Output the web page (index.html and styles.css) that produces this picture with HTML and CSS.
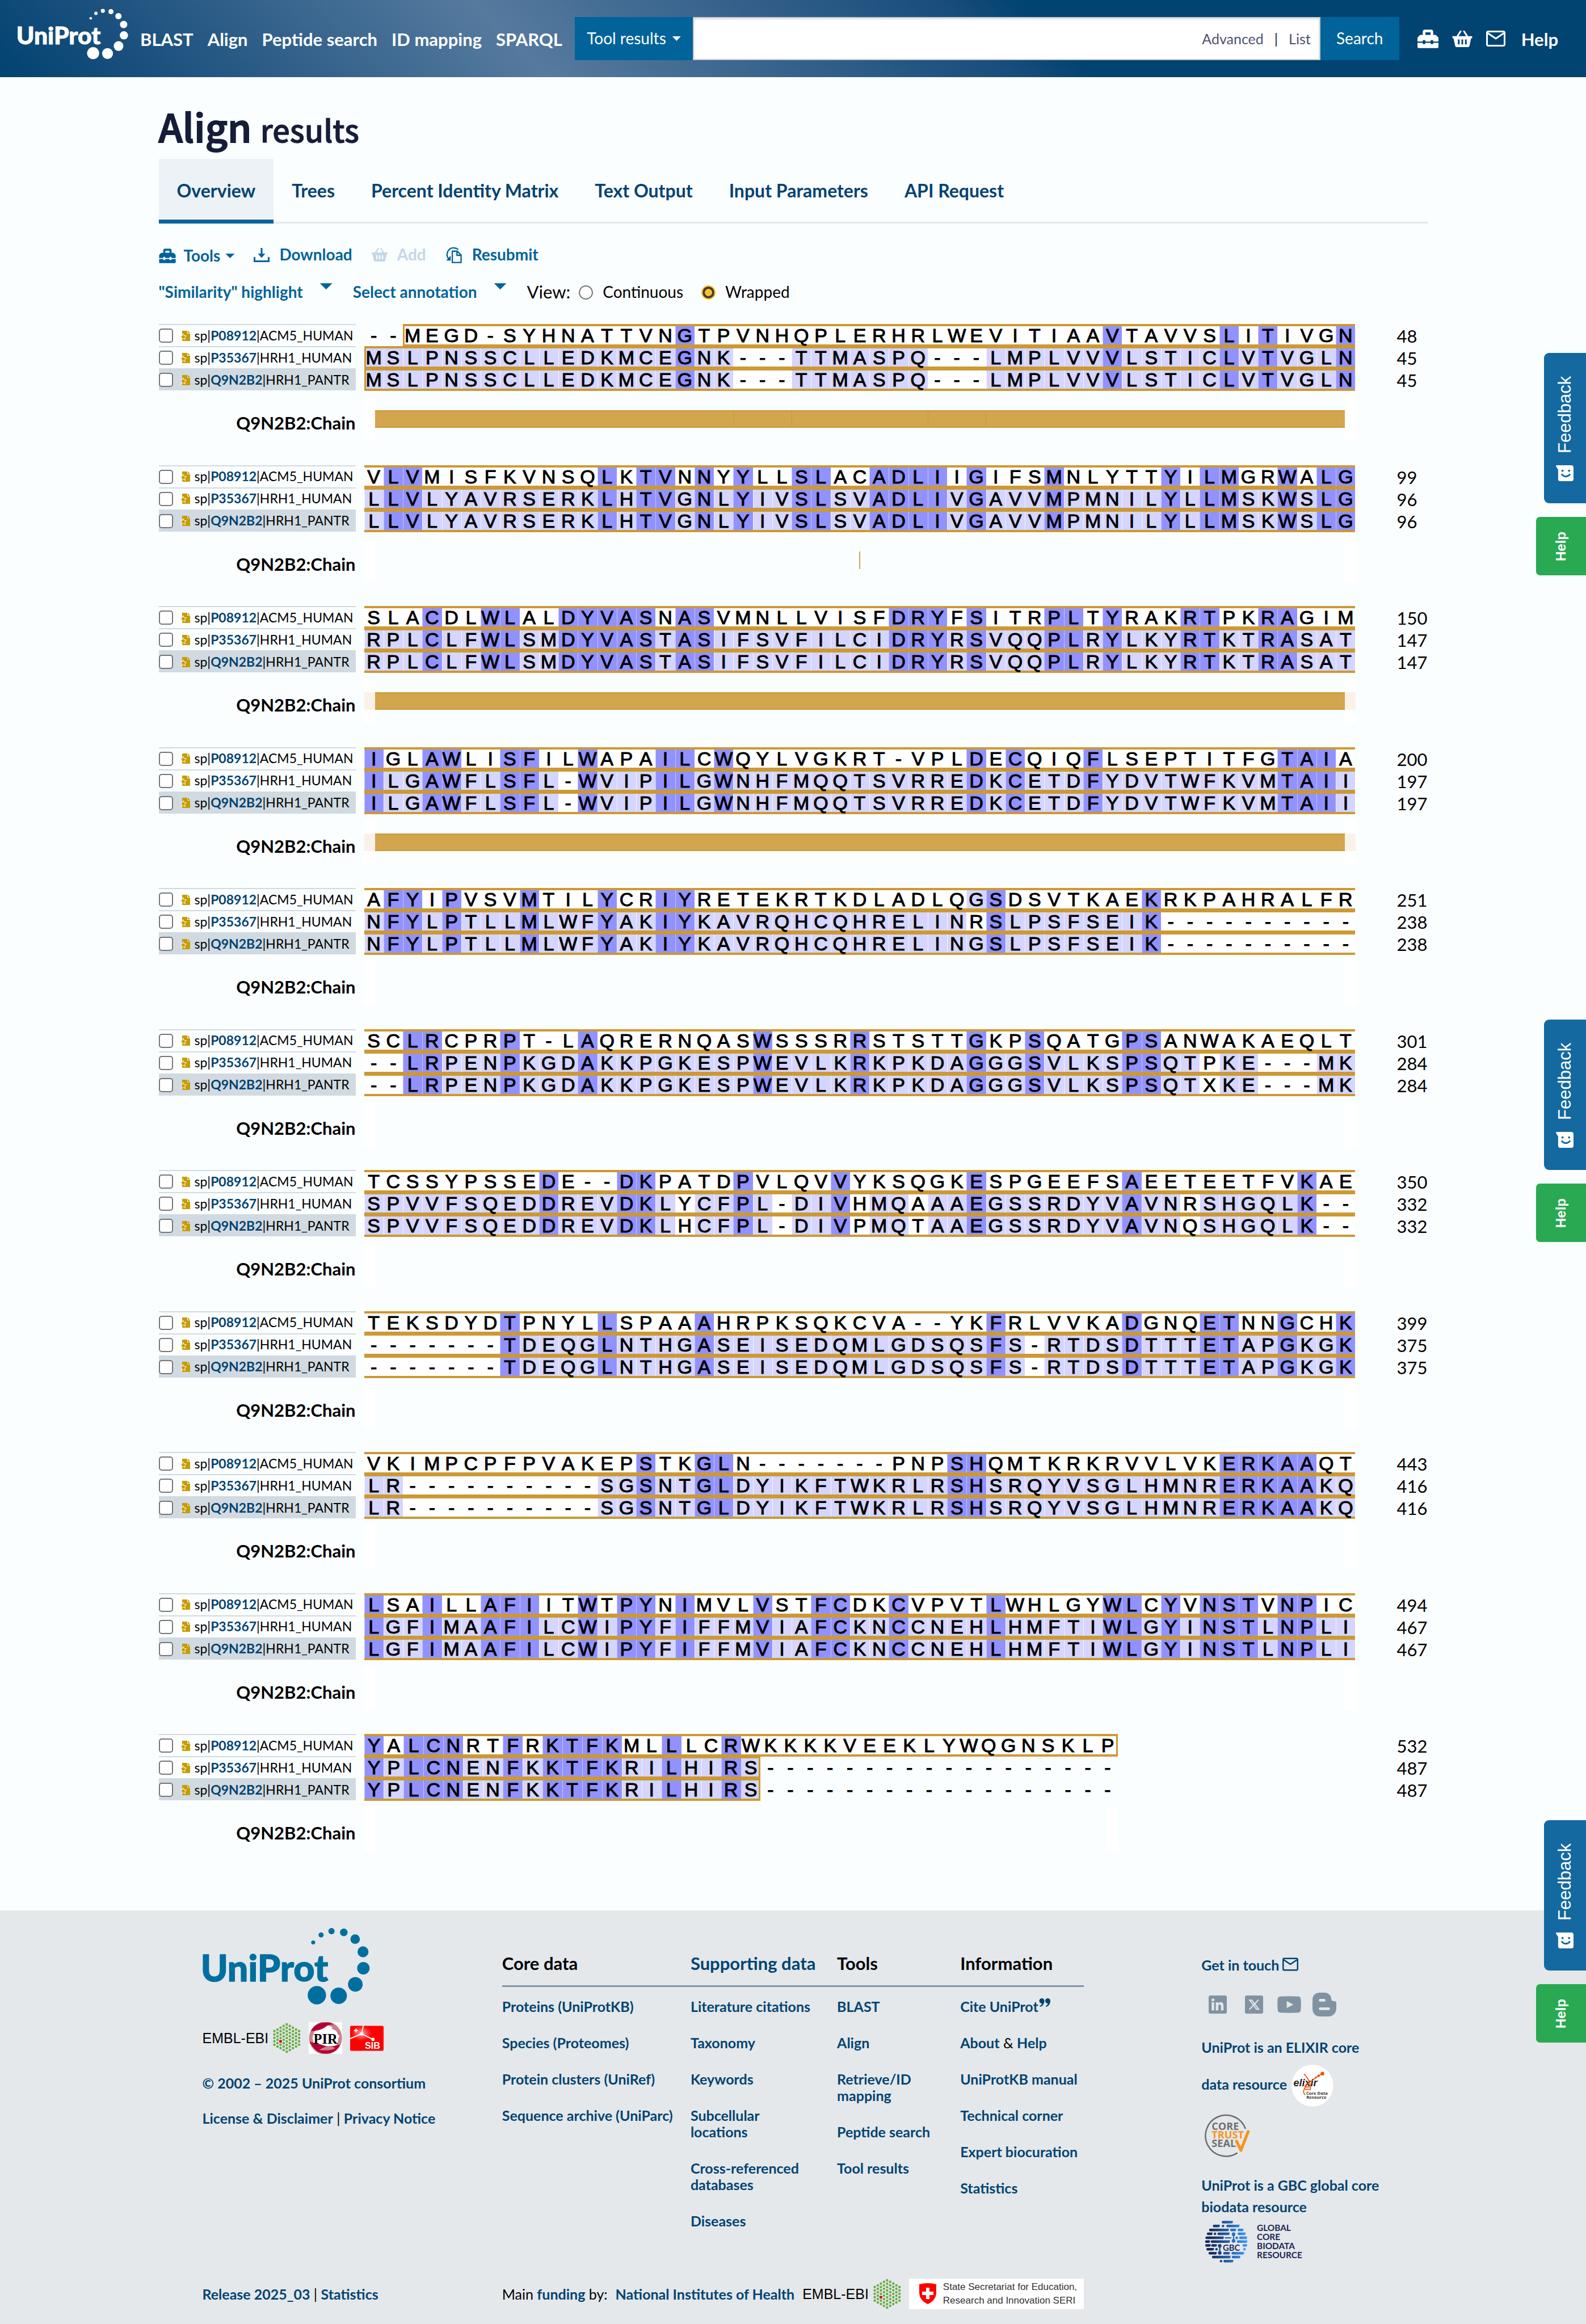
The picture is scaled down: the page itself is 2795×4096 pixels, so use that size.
FILE: index.html
```html
<!DOCTYPE html>
<html lang="en">
<head>
<meta charset="utf-8">
<title>Align results | UniProt</title>
<meta name="viewport" content="width=device-width, initial-scale=1">
<link rel="stylesheet" href="styles.css">
</head>
<body>
<svg class="sprite" aria-hidden="true">
  <symbol id="logo-dots" viewBox="38 35 914 418">
    <circle cx="642" cy="114" r="11"/><circle cx="685" cy="73" r="14"/><circle cx="742" cy="52" r="17"/>
    <circle cx="809" cy="59" r="21"/><circle cx="871" cy="96" r="26"/><circle cx="914" cy="165" r="30"/>
    <circle cx="916" cy="255" r="34"/><circle cx="872" cy="343" r="40"/><circle cx="781" cy="405" r="45"/>
    <circle cx="662" cy="402" r="50"/>
  </symbol>
  <symbol id="toolbox" viewBox="0 28 512 456">
    <path d="M502.6 214.6l-45.2-45.2c-6-6-14.2-9.4-22.7-9.4H384V80c0-26.5-21.5-48-48-48H176c-26.500 0-48 21.500-48 48v80H77.300c-8.500 0-16.600 3.400-22.700 9.400L9.400 214.600C3.400 220.600 0 228.800 0 237.300V320h128v-16c0-8.800 7.200-16 16-16h32c8.800 0 16 7.200 16 16v16h128v-16c0-8.800 7.200-16 16-16h32c8.800 0 16 7.200 16 16v16h128v-82.700c0-8.500-3.400-16.700-9.400-22.700zM320 160H192V96h128v64zm64 208c0 8.800-7.200 16-16 16h-32c-8.800 0-16-7.200-16-16v-16H192v16c0 8.800-7.200 16-16 16h-32c-8.800 0-16-7.200-16-16v-16H0v96c0 17.700 14.300 32 32 32h448c17.700 0 32-14.300 32-32v-96H384v16z"/>
  </symbol>
  <symbol id="basket" viewBox="0 0 36 30">
    <path d="M8 12 15 1M28 12 21 1" fill="none" stroke="currentColor" stroke-width="3" stroke-linecap="round"/>
    <path fill-rule="evenodd" d="M0 10h36v4h-2l-3 14q-.5 2-2.500 2h-21q-2 0-2.500-2L2 14H0zM10 16v9h3v-9zm6.500 0v9h3v-9zm6.500 0v9h3v-9z"/>
  </symbol>
  <symbol id="envelope" viewBox="0 0 34 28">
    <rect x="1.500" y="1.500" width="31" height="25" rx="2.500" fill="none" stroke="currentColor" stroke-width="3"/>
    <path d="M3 4.500 17 14 31 4.500" fill="none" stroke="currentColor" stroke-width="3"/>
  </symbol>
  <symbol id="download" viewBox="0 0 28 25">
    <path d="M12.500 0h3v10h5L14 17.500 7.500 10h5zM0 16h3v6h22v-6h3v9H0z"/>
  </symbol>
  <symbol id="resubmit" viewBox="0 0 30 30">
    <path d="M12 8h9l7 7v13.500H12zM20.500 8v7.500H28" fill="none" stroke="currentColor" stroke-width="2.400"/>
    <path d="M23 5C17 0 8 1 4 8c-3 6-1 12 3 16" fill="none" stroke="currentColor" stroke-width="2.400"/>
    <path d="M1 25h8v-9z"/>
  </symbol>
  <symbol id="reviewed" viewBox="0 0 17 18">
    <path fill="#c69c00" d="M3 0h9v5h5v13H3zM13 0l4 4h-4z"/>
    <path fill="#c69c00" stroke="#fff" d="M5 5l1.600 3.500 3.900.5-2.900 2.600.8 3.900L5 13.600l-3.400 1.900.8-3.900L-.5 9l3.900-.5z"/>
  </symbol>
  <symbol id="embl-dots" viewBox="428 550 153 168">
    <path fill="none" stroke="#6cae45" stroke-width="14" stroke-linecap="round" stroke-dasharray="0 18.750"
      d="M436 596V672M453 587V682M470 577V691M487 568V701M504 559V710M521 568V701M538 577V691M555 587V682M572 596V672"/>
    <circle cx="470" cy="652" r="8" fill="#e2001a"/>
  </symbol>
  <symbol id="smile" viewBox="0 0 32 29">
    <path d="M1 0h27q4 0 4 4v21q0 4-4 4H8q-4 0-4-4V8L0 2q0-2 1-2z"/>
    <circle class="knock" cx="12" cy="10" r="2"/><circle class="knock" cx="24" cy="10" r="2"/>
    <path class="knock-line" d="M10 16q8 9 16 0"/>
  </symbol>
</svg>

<header class="site-header">
  <a class="brand" href="#" aria-label="UniProt home"><svg viewBox="38 35 914 418"><text class="logo-word" x="28" y="327">UniProt</text><use href="#logo-dots" x="38" y="35" width="914" height="418"/></svg></a>
  <nav class="main-nav">
    <a href="#">BLAST</a><a href="#">Align</a><a href="#">Peptide search</a><a href="#">ID mapping</a><a href="#">SPARQL</a>
  </nav>
  <form class="search">
    <button class="search-scope" type="button">Tool results<span class="caret"></span></button>
    <div class="search-box">
      <input type="text" aria-label="Search text">
      <a href="#">Advanced</a><span class="bar">|</span><a href="#">List</a>
    </div>
    <button class="search-go" type="submit">Search</button>
  </form>
  <nav class="quick-nav">
    <a href="#" aria-label="Tool dashboard"><svg class="i-toolbox"><use href="#toolbox"/></svg></a>
    <a href="#" aria-label="Basket"><svg class="i-basket"><use href="#basket"/></svg></a>
    <a href="#" aria-label="Contact"><svg class="i-envelope"><use href="#envelope"/></svg></a>
    <a href="#">Help</a>
  </nav>
</header>

<main class="page">
  <h1>Align <small>results</small></h1>
  <nav class="tabs">
    <a class="active" href="#">Overview</a><a href="#">Trees</a><a href="#">Percent Identity Matrix</a><a href="#">Text Output</a><a href="#">Input Parameters</a><a href="#">API Request</a>
  </nav>
  <div class="toolbar">
    <button type="button" class="tools"><svg class="t-toolbox"><use href="#toolbox"/></svg>Tools<span class="caret"></span></button>
    <button type="button"><svg class="t-download"><use href="#download"/></svg>Download</button>
    <button type="button" disabled><svg class="t-basket"><use href="#basket"/></svg>Add</button>
    <button type="button"><svg class="t-resubmit"><use href="#resubmit"/></svg>Resubmit</button>
  </div>
  <div class="view-options">
    <button type="button">"Similarity" highlight<span class="caret"></span></button>
    <button type="button">Select annotation<span class="caret"></span></button>
    <fieldset>
      <span class="view-label">View:</span>
      <label><input type="radio" name="view">Continuous</label>
      <label><input type="radio" name="view" checked>Wrapped</label>
    </fieldset>
  </div>
  <section class="alignment" id="alignment" aria-label="Alignment"></section>
</main>

<footer class="site-footer">
  <div class="footer-grid">
    <div class="about">
      <a class="footer-logo" href="#" aria-label="UniProt"><svg viewBox="38 35 914 418"><text class="logo-word" x="28" y="327">UniProt</text><use href="#logo-dots" x="38" y="35" width="914" height="418"/></svg></a>
      <div class="partners">
        <span class="embl">EMBL-EBI</span>
        <svg class="dots"><use href="#embl-dots"/></svg>
        <svg class="pir" viewBox="624 548 183 172" role="img" aria-label="PIR">
          <path fill="#fff" d="M624 548h183v172H624z"/>
          <circle cx="716" cy="634" r="80" fill="none" stroke="#cf7f8d" stroke-width="20"/>
          <path fill="#fff" d="M690 562q50 30 105 60l-15 12q-50-40-110-52zM640 632q40 20 150-6l-6 14q-60 40-120 18z"/>
          <path fill="#b30032" d="M636 596q24-46 84-47 26 0 40 12-30-4-46 14-30 20-78 21zM628 654q50 10 90 24 40 4 78-8-18 44-74 49-50 2-78-40z"/>
          <path fill="#cf7f8d" d="M680 700q50-34 90-12-20 18-90 12zM770 560q30 26 30 56-24-24-52-34z"/>
          <text x="716" y="664" text-anchor="middle" class="pir-word">PIR</text>
        </svg>
        <svg class="sib" viewBox="849 568 183 137" role="img" aria-label="SIB">
          <defs><radialGradient id="glow" cx=".34" cy=".3" r=".3"><stop offset="0" stop-color="#ff9a9a"/><stop offset="1" stop-color="#fe0000"/></radialGradient></defs>
          <rect x="849" y="568" width="183" height="137" rx="7" fill="url(#glow)"/>
          <path d="M849 638 912 612 974 642M921 568 912 612M974 642V650" fill="none" stroke="#fff" stroke-width="6"/>
          <circle cx="912" cy="612" r="10" fill="#fff"/><circle cx="974" cy="642" r="9" fill="#fff"/>
          <path d="M881 583v22M870 594h22" stroke="#fff" stroke-width="6"/>
          <text x="930" y="695" class="sib-word">SIB</text>
        </svg>
      </div>
      <p><a href="#">© 2002 – 2025 UniProt consortium</a></p>
      <p><a href="#">License &amp; Disclaimer</a> | <a href="#">Privacy Notice</a></p>
    </div>

    <nav class="sitemap">
      <h2>Core data</h2><h2><a href="#">Supporting data</a></h2><h2>Tools</h2><h2>Information</h2>
      <ul><li><a href="#">Proteins (UniProtKB)</a></li><li><a href="#">Species (Proteomes)</a></li><li><a href="#">Protein clusters (UniRef)</a></li><li><a href="#">Sequence archive (UniParc)</a></li></ul>
      <ul><li><a href="#">Literature citations</a></li><li><a href="#">Taxonomy</a></li><li><a href="#">Keywords</a></li><li><a href="#">Subcellular<br>locations</a></li><li><a href="#">Cross-referenced databases</a></li><li><a href="#">Diseases</a></li></ul>
      <ul><li><a href="#">BLAST</a></li><li><a href="#">Align</a></li><li><a href="#">Retrieve/ID<br>mapping</a></li><li><a href="#">Peptide search</a></li><li><a href="#">Tool results</a></li></ul>
      <ul><li><a href="#">Cite UniProt<svg class="quotes" viewBox="0 0 20 15"><path d="M5 0a4.500 4.500 0 0 1 4.500 4.500C9.500 10 6 14 2 15l-.8-1.500C4 12 5 10.500 5 9A4.500 4.500 0 0 1 5 0zM15.500 0A4.500 4.500 0 0 1 20 4.500C20 10 16.500 14 12.500 15l-.8-1.500c2.800-1.500 3.800-3 3.800-4.500a4.500 4.500 0 0 1 0-9z"/></svg></a></li><li><a href="#">About</a> &amp; <a href="#">Help</a></li><li><a href="#">UniProtKB manual</a></li><li><a href="#">Technical corner</a></li><li><a href="#">Expert biocuration</a></li><li><a href="#">Statistics</a></li></ul>
    </nav>

    <div class="contact">
      <p><a href="#">Get in touch <svg class="mail"><use href="#envelope"/></svg></a></p>
      <div class="social">
        <a href="#" aria-label="LinkedIn"><svg class="square" viewBox="0 0 33 33"><rect width="33" height="33" rx="3"/><path class="paper" d="M5.500 12.500h4.500V27H5.500zM13 12.500h4.300v2c2.500-3.700 9.700-3.200 9.700 4V27h-4.500v-7.500c0-4.500-5-4-5 0V27H13z"/><circle class="paper" cx="7.800" cy="8" r="2.600"/></svg></a>
        <a href="#" aria-label="X"><svg class="square" viewBox="0 0 33 33"><rect width="33" height="33" rx="3"/><path class="paper-line" d="M8.500 8.500h4L25 25h-4zM24.500 8 8 25.500"/></svg></a>
        <a href="#" aria-label="YouTube"><svg class="wide" viewBox="0 0 43 31"><path d="M5 .7Q21 0 38 .7q4 .3 4.500 5 1 10 0 20-.5 4.300-4.500 4.600-17 .9-33 0-4-.3-4.500-4.600-1-10 0-20Q1 1 5 .7z"/><path class="paper" d="M17 9v13l12-6.500z"/></svg></a>
        <a href="#" aria-label="Blogger"><svg class="tall" viewBox="0 0 43 43"><path d="M13 0h8c8 0 12.500 5 13 11 .2 3 1 4 3.500 4 4 0 5.500 1 5.500 4v9c0 9-6 15-14 15H14C5 43 0 37 0 29V13C0 5 5 0 13 0z"/><path class="paper-bar" d="M14 13.700h7M14 29h15"/></svg></a>
      </div>
      <p class="elixir"><a href="#">UniProt is an ELIXIR core<br>data resource
        <svg viewBox="529 437 231 231" role="img" aria-label="ELIXIR Core Data Resource">
          <circle cx="644" cy="552" r="115" fill="#fff"/>
          <text class="elixir-word" x="540" y="555">elixir</text>
          <path d="M598 488q28 28 34 60 4 20-2 30M700 484q-50 34-76 52-22 20-28 44-2 14 8 24M606 560h22M602 572h26" fill="none" stroke="#f04e00" stroke-width="5"/>
          <circle cx="699" cy="486" r="10" fill="#f04e00"/><circle cx="678" cy="498" r="7" fill="#f04e00"/><circle cx="662" cy="507" r="5" fill="#f04e00"/>
          <text class="elixir-small" x="610" y="604">Core Data</text><text class="elixir-small" x="611" y="625">Resource</text>
        </svg></a></p>
      <a class="trust" href="#"><svg viewBox="55 709 247 234" role="img" aria-label="Core Trust Seal">
        <path d="M277 789A112 112 0 1 0 233 920" fill="none" stroke="#6e6f73" stroke-width="8"/>
        <text class="trust-word" x="93" y="794">CORE</text><text class="trust-word hot" x="93" y="841">TRUST</text><text class="trust-word" x="93" y="888">SEAL</text>
        <path d="M228 856 252 906 292 804" fill="none" stroke="#f7941d" stroke-width="16" stroke-linecap="round" stroke-linejoin="round"/>
      </svg></a>
      <p class="gbc"><a href="#">UniProt is a GBC global core<br>biodata resource</a></p>
      <a class="gbc-logo" href="#"><svg viewBox="58 1290 545 237" role="img" aria-label="Global Core Biodata Resource">
        <defs><linearGradient id="sea" gradientUnits="userSpaceOnUse" x1="90" y1="0" x2="280" y2="0"><stop offset="0" stop-color="#16295a"/><stop offset="1" stop-color="#3596f5"/></linearGradient></defs>
        <g fill="none" stroke="url(#sea)" stroke-linecap="round">
          <path stroke-width="14" d="M157 1301h47v.1M108 1322h24v.1M157 1322v.1M182 1322h58v.1M87 1344h95v.1M203 1344h19v.1M244 1344h18v.1M75 1365h17v.1M113 1365v.1M133 1365h53v.1M244 1365h30v.1M67 1387h87v.1M232 1387v.1M252 1387h30v.1M65 1408h13v.1M96 1408h92v.1M240 1408h43v.1M66 1429h16v.1M99 1429h17v.1M271 1429h11v.1M72 1450h28v.1M121 1450v.1M275 1450v.1M84 1472h31v.1M165 1472h22v.1M210 1472h55v.1M103 1493h88v.1M212 1493h33v.1M146 1515v.1M166 1515h40v.1"/>
          <path stroke-width="20" d="M215 1367v.1M215 1404v.1M139 1431v.1M139 1470v.1"/>
          <path stroke-width="7" d="M215 1367l.1 37M139 1431l.1 39M170 1387l30 .1"/>
        </g>
        <text class="gbc-word" x="156" y="1457">GBC</text>
        <text class="gbc-name" x="343" y="1349">GLOBAL</text><text class="gbc-name" x="343" y="1399">CORE</text><text class="gbc-name" x="343" y="1450">BIODATA</text><text class="gbc-name" x="343" y="1500">RESOURCE</text>
      </svg></a>
    </div>
  </div>

  <div class="footer-grid footer-bottom">
    <p><a href="#">Release 2025_03</a> | <a href="#">Statistics</a></p>
    <div class="funding">
      <p>Main <a href="#">funding</a> by:</p>
      <a href="#">National Institutes of Health</a>
      <span class="embl">EMBL-EBI</span>
      <svg class="dots"><use href="#embl-dots"/></svg>
      <a class="seri" href="#">
        <svg viewBox="0 0 32 38"><path fill="#f00" d="M1 2q15-4 30 0v14q0 14-15 21Q1 30 1 16z"/><path fill="#fff" d="M13 8h6v7h7v6h-7v7h-6v-7H6v-6h7z"/></svg>
        <span>State Secretariat for Education,<br>Research and Innovation SERI</span>
      </a>
    </div>
  </div>
</footer>

<aside class="side-tabs first"><button type="button" class="feedback"><svg><use href="#smile"/></svg>Feedback</button><button type="button" class="help">Help</button></aside>
<aside class="side-tabs second"><button type="button" class="feedback"><svg><use href="#smile"/></svg>Feedback</button><button type="button" class="help">Help</button></aside>
<aside class="side-tabs third"><button type="button" class="feedback"><svg><use href="#smile"/></svg>Feedback</button><button type="button" class="help">Help</button></aside>

<script src="script.js"></script>
</body>
</html>
```

FILE: script.js
```js
// Aligned sequences, one array entry per wrapped block.
const names = [
  { accession: 'P08912', entry: 'ACM5_HUMAN' },
  { accession: 'P35367', entry: 'HRH1_HUMAN' },
  { accession: 'Q9N2B2', entry: 'HRH1_PANTR', active: true },
];

const blocks = [
  { ends: [48, 45, 45], rows: [
    '--MEGD-SYHNATTVNGTPVNHQPLERHRLWEVITIAAVTAVVSLITIVGN',
    'MSLPNSSCLLEDKMCEGNK---TTMASPQ---LMPLVVVLSTICLVTVGLN',
    'MSLPNSSCLLEDKMCEGNK---TTMASPQ---LMPLVVVLSTICLVTVGLN'] },
  { ends: [99, 96, 96], rows: [
    'VLVMISFKVNSQLKTVNNYYLLSLACADLIIGIFSMNLYTTYILMGRWALG',
    'LLVLYAVRSERKLHTVGNLYIVSLSVADLIVGAVVMPMNILYLLMSKWSLG',
    'LLVLYAVRSERKLHTVGNLYIVSLSVADLIVGAVVMPMNILYLLMSKWSLG'] },
  { ends: [150, 147, 147], rows: [
    'SLACDLWLALDYVASNASVMNLLVISFDRYFSITRPLTYRAKRTPKRAGIM',
    'RPLCLFWLSMDYVASTASIFSVFILCIDRYRSVQQPLRYLKYRTKTRASAT',
    'RPLCLFWLSMDYVASTASIFSVFILCIDRYRSVQQPLRYLKYRTKTRASAT'] },
  { ends: [200, 197, 197], rows: [
    'IGLAWLISFILWAPAILCWQYLVGKRT-VPLDECQIQFLSEPTITFGTAIA',
    'ILGAWFLSFL-WVIPILGWNHFMQQTSVRREDKCETDFYDVTWFKVMTAII',
    'ILGAWFLSFL-WVIPILGWNHFMQQTSVRREDKCETDFYDVTWFKVMTAII'] },
  { ends: [251, 238, 238], rows: [
    'AFYIPVSVMTILYCRIYRETEKRTKDLADLQGSDSVTKAEKRKPAHRALFR',
    'NFYLPTLLMLWFYAKIYKAVRQHCQHRELINRSLPSFSEIK----------',
    'NFYLPTLLMLWFYAKIYKAVRQHCQHRELINGSLPSFSEIK----------'] },
  { ends: [301, 284, 284], rows: [
    'SCLRCPRPT-LAQRERNQASWSSSRRSTSTTGKPSQATGPSANWAKAEQLT',
    '--LRPENPKGDAKKPGKESPWEVLKRKPKDAGGGSVLKSPSQTPKE---MK',
    '--LRPENPKGDAKKPGKESPWEVLKRKPKDAGGGSVLKSPSQTXKE---MK'] },
  { ends: [350, 332, 332], rows: [
    'TCSSYPSSEDE--DKPATDPVLQVVYKSQGKESPGEEFSAEETEETFVKAE',
    'SPVVFSQEDDREVDKLYCFPL-DIVHMQAAAEGSSRDYVAVNRSHGQLK--',
    'SPVVFSQEDDREVDKLHCFPL-DIVPMQTAAEGSSRDYVAVNQSHGQLK--'] },
  { ends: [399, 375, 375], rows: [
    'TEKSDYDTPNYLLSPAAAHRPKSQKCVA--YKFRLVVKADGNQETNNGCHK',
    '-------TDEQGLNTHGASEISEDQMLGDSQSFS-RTDSDTTTETAPGKGK',
    '-------TDEQGLNTHGASEISEDQMLGDSQSFS-RTDSDTTTETAPGKGK'] },
  { ends: [443, 416, 416], rows: [
    'VKIMPCPFPVAKEPSTKGLN-------PNPSHQMTKRKRVVLVKERKAAQT',
    'LR----------SGSNTGLDYIKFTWKRLRSHSRQYVSGLHMNRERKAAKQ',
    'LR----------SGSNTGLDYIKFTWKRLRSHSRQYVSGLHMNRERKAAKQ'] },
  { ends: [494, 467, 467], rows: [
    'LSAILLAFIITWTPYNIMVLVSTFCDKCVPVTLWHLGYWLCYVNSTVNPIC',
    'LGFIMAAFILCWIPYFIFFMVIAFCKNCCNEHLHMFTIWLGYINSTLNPLI',
    'LGFIMAAFILCWIPYFIFFMVIAFCKNCCNEHLHMFTIWLGYINSTLNPLI'] },
  { ends: [532, 487, 487], rows: [
    'YALCNRTFRKTFKMLLLCRWKKKKVEEKLYWQGNSKLP',
    'YPLCNENFKKTFKRILHIRS------------------',
    'YPLCNENFKKTFKRILHIRS------------------'] },
];

// Chain annotation drawn under a block: a bar with its splits (in % of the width), or a single tick.
const chains = {
  0: { bar: true, splits: [37, 43, 57, 63] },
  1: { bar: false },
  2: { bar: true, splits: [], faded: true },
  3: { bar: true, splits: [], faded: true },
};

const make = (tag, className, text) => {
  const node = document.createElement(tag);
  if (className) node.className = className;
  if (text !== undefined) node.textContent = text;
  return node;
};

// "full" when the whole column agrees, "part" when two of three do.
const similarity = (rows, column, residue) => {
  if (residue === '-') return '';
  const same = rows.filter((row) => row[column] === residue).length;
  return same === rows.length ? ' full' : same > 1 ? ' part' : '';
};

const renderLabel = ({ accession, entry, active }, index) => {
  const id = `select-${index}-${accession}`;
  const row = make('div', active ? 'seq-label active' : 'seq-label');
  const box = make('input');
  box.type = 'checkbox';
  box.id = id;
  const label = make('label');
  label.htmlFor = id;
  label.innerHTML = `<svg class="reviewed"><use href="#reviewed"/></svg>sp|<a href="#">${accession}</a>|${entry}`;
  row.append(box, label);
  return row;
};

const renderSequence = (rows, r, isFirst, isLast) => {
  const row = rows[r];
  const line = make('div', 'sequence');
  line.style.gridTemplateColumns = `repeat(${row.length}, 1fr)`;
  const start = isFirst ? row.search(/[A-Z]/) : 0;
  const end = isLast ? row.length - row.match(/-*$/)[0].length - 1 : row.length - 1;
  [...row].forEach((residue, i) => {
    let name = 'residue' + similarity(rows, i, residue);
    if (i >= start && i <= end) name += ' in';
    if (isFirst && i === start) name += ' start';
    if (isLast && i === end) name += ' end';
    line.append(make('span', name, residue));
  });
  return line;
};

const renderTrack = (chain) => {
  const track = make('div', 'track');
  if (!chain) return track;
  if (!chain.bar) {
    track.append(make('div', 'tick'));
    return track;
  }
  if (chain.faded) track.classList.add('faded');
  const bar = make('div', 'bar-fill');
  chain.splits.forEach((at) => {
    const split = make('i');
    split.style.left = `${at}%`;
    bar.append(split);
  });
  track.append(bar);
  return track;
};

const host = document.getElementById('alignment');
blocks.forEach(({ rows, ends }, b) => {
  const block = make('div', 'block');
  const labels = make('div', 'labels');
  names.forEach((name) => labels.append(renderLabel(name, b)));
  labels.append(make('div', 'track-label', 'Q9N2B2:Chain'));

  const isLast = b === blocks.length - 1;
  const canvas = make('div', isLast ? 'canvas short' : 'canvas');
  rows.forEach((_, r) => canvas.append(renderSequence(rows, r, b === 0, isLast)));
  canvas.append(renderTrack(chains[b]));

  const numbers = make('div', 'ends');
  ends.forEach((end) => numbers.append(make('span', '', end)));
  block.append(labels, canvas, numbers);
  host.append(block);
});
```

FILE: styles.css
```css
:root {
  --sea: #00639a;
  --sapphire: #014371;
  --platinum: #e4e8eb;
  --gold: #cc9933;
  --paper: #fbfeff;
}

* { box-sizing: border-box; }

body {
  position: relative;
  margin: 0;
  background: var(--paper);
  color: #000;
  font: 400 31px/1.2 Lato, sans-serif;
}

a { color: inherit; text-decoration: none; }
button { border: 0; padding: 0; background: none; color: inherit; font: inherit; }
svg { display: block; fill: currentColor; }
.sprite { position: absolute; width: 0; height: 0; }
.logo-word { font: 900 200px Lato, sans-serif; stroke: currentColor; stroke-width: 4px; stroke-linejoin: round; }

.caret {
  width: 16px;
  height: 8px;
  background: currentColor;
  clip-path: polygon(0 0, 100% 0, 50% 100%);
}

/* Header */
.site-header {
  display: flex;
  align-items: center;
  height: 136px;
  padding: 0 49px 0 31px;
  background: linear-gradient(45deg, #014371 0%, #194f7d 9%, #567a9e 33%, #194d7c 61%, #014371 66%);
  color: #fff;
}
.brand { align-self: flex-start; margin-top: 15px; }
.brand svg, .footer-logo svg { overflow: visible; }
.brand svg { width: 195px; height: 90px; }
.main-nav { display: flex; gap: 25px; margin: 4px 22px 0 21px; font-weight: 700; }
.search { display: flex; flex: 1; height: 76px; font-size: 28px; }
.search-scope { display: flex; align-items: center; justify-content: center; gap: 11px; width: 208px; background: var(--sea); }
.search-scope .caret { width: 15px; }
.search-box {
  display: flex;
  flex: 1;
  align-items: center;
  padding-right: 15px;
  border: 2px solid #cacaca;
  background: #fff;
  box-shadow: inset 0 2px 4px rgba(0, 0, 0, .12);
  color: #4f5170;
  font-size: 25px;
}
.search-box input { flex: 1; min-width: 0; height: 100%; border: 0; background: none; font: inherit; outline: 0; }
.search-box .bar { margin: 0 19px; color: #161d39; }
.search-go { width: 139px; background: var(--sea); }
.quick-nav { display: flex; align-items: center; margin-left: 32px; font-weight: 700; }
.quick-nav a:last-child { margin-top: 4px; }
.i-toolbox { width: 37px; height: 33px; margin-right: 24px; }
.i-basket { width: 36px; height: 29px; margin-right: 24px; }
.i-envelope { width: 34px; height: 28px; margin-right: 28px; }

/* Page */
.page { margin: 0 10%; padding: 36px 0 105px; }
h1 { margin: 0; color: #161d39; font: 500 68px/100px "Noto Sans CJK JP", sans-serif; -webkit-text-stroke: 2px #161d39; }
h1 small { font-size: 54px; line-height: 1; -webkit-text-stroke-width: 1px; }

.tabs { display: flex; margin-top: 8px; border-bottom: 3px solid var(--platinum); color: var(--sapphire); font-size: 32px; font-weight: 700; }
.tabs a { height: 114px; margin-bottom: -3px; padding: 37px 32px 0; }
.tabs .active { border-bottom: 7px solid var(--sea); background: #edf2f6; }

.toolbar { display: flex; align-items: center; gap: 34px; height: 36px; margin-top: 37px; color: var(--sea); font-size: 28px; font-weight: 700; }
.toolbar button { display: flex; align-items: center; gap: 17px; }
.toolbar button:disabled { color: #c5d7e5; }
.toolbar .tools { gap: 14px; padding-top: 4px; }
.toolbar .tools .caret { margin-left: -5px; }
.t-toolbox { width: 30px; height: 26px; }
.t-download { width: 28px; height: 25px; }
.t-basket { width: 28px; height: 24px; }
.t-resubmit { width: 30px; height: 29px; }

.view-options { display: flex; align-items: center; gap: 36px; height: 40px; margin-top: 28px; font-size: 28px; }
.view-options > button { display: flex; align-items: flex-start; gap: 30px; color: var(--sea); font-weight: 700; }
.view-options .caret { width: 22px; height: 11px; margin-top: 1px; }
fieldset { display: flex; align-items: center; gap: 32px; margin: 0; padding: 0; border: 0; }
.view-label { margin-right: -17px; font-size: 31px; }
fieldset label { display: flex; align-items: center; gap: 17px; }
input[type=radio] { appearance: none; width: 25px; height: 25px; margin: 0; border: 2px solid #767676; border-radius: 50%; background: #fff; }
input[type=radio]:checked { border-color: #fbbd1e; background: #fdbf25; box-shadow: inset 0 0 0 4px #3c3c3c; }

/* Alignment */
.alignment { display: flex; flex-direction: column; justify-content: space-between; min-height: 2691px; margin-top: 36px; }
.block { display: grid; grid-template-columns: 347px 1fr 54px; }
.seq-label { display: flex; align-items: center; height: 39px; border-top: 2px solid #d1dae1; font-size: 23px; white-space: nowrap; }
.seq-label.active { background: #d1dae1; }
.seq-label label { display: flex; align-items: center; }
.seq-label a { color: var(--sapphire); font-weight: 700; }
.seq-label input { appearance: none; width: 25px; height: 25px; margin: 0 13px 0 0; border: 2px solid #767676; border-radius: 5px; background: #fff; }
.reviewed { width: 17px; height: 18px; margin-right: 8px; }
.track-label { margin-top: 39px; font-size: 31px; font-weight: 700; text-align: right; }
.canvas { margin: 0 73px 0 15px; }
.canvas.short { margin-right: 492px; }
.sequence { display: grid; height: 39px; }
.residue {
  min-width: 0;
  border-block: 4px solid transparent;
  font: 400 34px/32px "Liberation Sans", sans-serif;
  text-align: center;
  -webkit-text-stroke: 1px #000;
}
.residue.in { border-color: var(--gold); background-color: #fff; }
.residue.part { background-color: #d5d5fe; box-shadow: inset 1px 0 #f4f4ff; }
.residue.full { background-color: #9292fe; box-shadow: inset 1px 0 #c4c4ff; }
.residue.start { box-shadow: inset 3px 0 var(--gold); }
.residue.end { box-shadow: inset -3px 0 var(--gold); }
.track { height: 77px; margin-top: 12px; padding: 23px 19px; background: linear-gradient(90deg, #fff 19px, transparent 19px calc(100% - 19px), #fff 0); }
.track.faded { background: linear-gradient(#fff 23px, #faf2e8 23px 54px, #fff 54px) 0 0 / 19px 100% no-repeat, linear-gradient(#fff 23px, #faf2e8 23px 54px, #fff 54px) 100% 0 / 19px 100% no-repeat; }
.bar-fill { position: relative; height: 31px; border-block: 2px solid var(--gold); background: #d2a54e; }
.bar-fill i { position: absolute; top: 0; width: 1px; height: 100%; background: var(--gold); }
.tick { width: 2px; height: 31px; margin: 0 auto; background: #d2a54e; }
.ends span { display: block; height: 39px; line-height: 42px; }

/* Footer */
.site-footer { padding: 31px 10% 27px; background: var(--platinum); font-size: 25px; }
.site-footer p { margin: 0; }
.site-footer a { color: var(--sapphire); font-weight: 700; }
.footer-grid { display: grid; grid-template-columns: 528fr 1232fr 398fr; padding-left: 77px; }
.footer-logo svg { width: 295px; height: 135px; fill: #006f9f; color: #006f9f; }
.partners { display: flex; align-items: center; height: 56px; margin: 31px 0 36px; }
.embl { font: 400 25px "Liberation Sans", sans-serif; }
.dots { width: 49px; height: 54px; margin-left: 8px; }
.pir { width: 59px; height: 56px; margin-left: 14px; }
.sib { width: 59px; height: 45px; margin-left: 14px; }
.pir-word { font: 700 76px "Liberation Serif", serif; fill: #000; }
.sib-word { font: 700 50px "Liberation Sans", sans-serif; fill: #fff; }
.about p { height: 62px; }

.sitemap { display: grid; grid-template-columns: 332fr 258fr 217fr 218fr; grid-template-rows: 79px auto; align-content: start; margin: 39px 207px 0 0; }
.sitemap h2 { margin: 0 0 14px; padding-top: 4px; border-bottom: 3px solid #8193a6; font-size: 31px; line-height: 38px; }
.sitemap ul { margin: 0; padding: 6px 0 0; list-style: none; line-height: 29px; }
.sitemap li { margin-bottom: 35px; }
.quotes { display: inline-block; width: 20px; height: 15px; margin: 0 0 -3px 1px; vertical-align: 12px; }

.contact { margin-top: 50px; }
.contact svg { display: inline-block; }
.mail { width: 28px; height: 24px; vertical-align: -1px; }
.social { display: flex; align-items: center; height: 42px; margin: 34px 0 24px 13px; }
.social svg { display: block; fill: #8193a2; }
.square { width: 32px; height: 32px; margin-right: 32px; }
.wide { width: 42px; height: 30px; margin: 0 20px 0 -7px; }
.tall { width: 42px; height: 42px; }
.social .paper { fill: var(--platinum); }
.social .paper-line { fill: none; stroke: var(--platinum); stroke-width: 2; }
.social .paper-bar { fill: none; stroke: var(--platinum); stroke-width: 5; stroke-linecap: round; }
.elixir { line-height: 61px; }
.elixir svg { width: 74px; height: 74px; margin-left: 2px; vertical-align: -30px; }
.elixir-word { font: italic 700 56px "Liberation Sans", sans-serif; fill: #222; }
.elixir-small { font: 700 24px "Open Sans", sans-serif; fill: #333; }
.trust svg { display: block; width: 80px; height: 76px; margin: 13px 0 0 6px; }
.trust-word { font: 700 56px "Open Sans", sans-serif; fill: #6e6f73; }
.trust-word.hot { fill: #f7941d; }
.site-footer .gbc { margin-top: 30px; line-height: 38px; }
.gbc-logo svg { display: block; width: 176px; height: 76px; margin: 5px 0 0 6px; }
.gbc-word { font: 700 46px Lato, sans-serif; fill: #16295a; }
.gbc-name { font: 700 48px Lato, sans-serif; fill: #1b2553; }

.footer-bottom { align-items: center; height: 54px; margin-top: 27px; }
.funding { display: flex; align-items: center; gap: 14px; margin-right: 207px; white-space: nowrap; }
.funding .dots { margin-left: -6px; }
.seri { display: flex; align-items: center; gap: 11px; flex: 1; height: 54px; padding-left: 17px; background: #fff; font: 400 17px/24px "Liberation Sans", sans-serif; }
.site-footer .seri { color: #333; font-weight: 400; }
.seri svg { width: 32px; height: 38px; }

/* Floating side tabs */
.side-tabs { position: absolute; right: 0; display: flex; flex-direction: column; align-items: flex-end; gap: 24px; color: #fff; }
.side-tabs.first { top: 622px; }
.side-tabs.second { top: 1797px; }
.side-tabs.third { top: 3208px; }
.side-tabs button { writing-mode: vertical-rl; transform: rotate(180deg); font-family: "Liberation Sans", sans-serif; }
.feedback { display: flex; align-items: center; gap: 21px; width: 74px; height: 265px; padding: 39px 0; border-radius: 0 9px 9px 0; background: #1369a0; font-size: 31px; }
.feedback svg { width: 31px; height: 28px; transform: rotate(180deg); }
.knock { fill: #1369a0; }
.knock-line { fill: none; stroke: #1369a0; stroke-width: 3; }
.help { width: 88px; height: 103px; border-radius: 0 7px 7px 0; background: #28a952; font-size: 24px; font-weight: 700; }
```
